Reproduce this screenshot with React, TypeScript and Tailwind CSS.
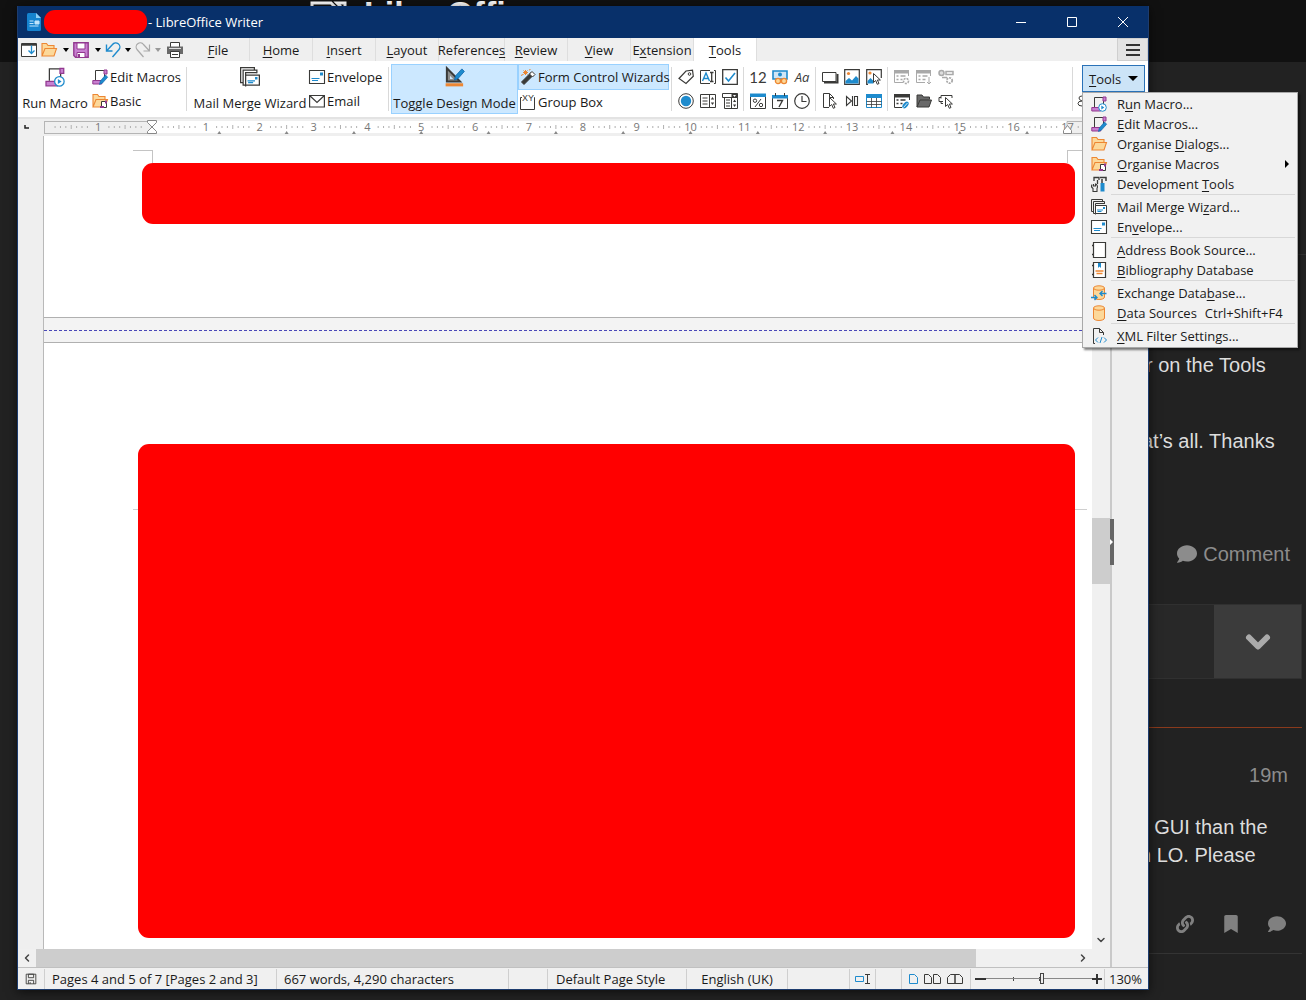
import React from "react";
import { FaBookmark, FaComment, FaLink } from "react-icons/fa";
import { ChevronDown, ChevronLeft, ChevronRight } from "lucide-react";
import clsx from "clsx";

const DARK = "#3a3a38";
const BLUE = "#1e8bcd";
const ORANGE = "#ed8733";
const PURPLE = "#92398f";
const GREY = "#a9a9a9";

const scroll = (
  <>
    <path d="M3.500 11V1.500H12M12.500 10V5" stroke={DARK} />
    <path d="M12 1h3v4h-3z" fill="#c77fd0" stroke={PURPLE} />
    <path d="M.8 11.500h9v3.500h-9z" fill="#c77fd0" stroke={PURPLE} />
  </>
);

const folder = (
  <path
    d="M1 14V1.500H5.500l1.500 2h6v2.500M1 14l3-7.500h11.500L13 14z"
    fill="#fcd89a"
    stroke={ORANGE}
    strokeWidth="1.100"
  />
);

const pencil = (
  <path d="M7.500 15.500l.8-3.500L13.500 6l2.200 2.200L10.500 14z" fill={BLUE} stroke="#0a62a8" strokeWidth=".6" />
);

const mail = (
  <>
    <path d="M.5 1.500h15v13H.5z" fill="#fff" stroke={DARK} strokeWidth="1.100" />
    <path d="M11 3.500h3v3h-3z" fill={BLUE} />
    <path d="M2.500 9.500h8M3 11.500h6" stroke={BLUE} />
  </>
);

const mergeMail = (
  <>
    <path d="M2 12.500H.5V.5h11v1.500M4 14.500H2.500V2.500h11V5" stroke={DARK} />
    <path d="M4.500 15.500V4.500h9" stroke={DARK} />
    <path d="M4.500 6.500h11v8h-11z" fill="#fff" stroke={DARK} />
    <path d="M12 8h2v2h-2z" fill={BLUE} />
    <path d="M6 11h6M6.500 12.500h4" stroke={BLUE} />
  </>
);

const cursor = (
  <path d="M7.500 4.500v9l2.200-2 1.600 3.800 1.700-.8-1.600-3.500h3z" fill="#fff" stroke={DARK} />
);

const icons: Record<string, React.ReactNode> = {
  sidebarDown: (
    <>
      <path d="M.5 1.500h15v13H.5z" fill="#fff" stroke={DARK} />
      <path d="M1 2.500h14" stroke={DARK} strokeWidth="2.500" />
      <path d="M10.500 3.500v8M7.500 8.500l3 3 3-3" stroke={BLUE} strokeWidth="1.300" />
    </>
  ),
  folder,
  save: (
    <>
      <path d="M.8.8h14.400v14.400H2.500L.8 13.500z" fill="#c77fd0" stroke={PURPLE} strokeWidth="1.400" />
      <path d="M4 1h8v6H4z" fill="#fff" stroke={PURPLE} />
      <path d="M4 15v-4.500h8V15" fill="#fff" stroke={PURPLE} />
      <path d="M6 12v3" stroke={PURPLE} strokeWidth="2" />
    </>
  ),
  undo: (
    <path d="M1.500 2.500v6.500h6M1.500 9l6-6.500a4 4 0 0 1 6.500 5L7.500 15" stroke={BLUE} strokeWidth="1.400" />
  ),
  redo: (
    <path d="M14.500 2.500v6.500h-6M14.500 9l-6-6.500a4 4 0 0 0-6.500 5L8.500 15" stroke={GREY} strokeWidth="1.200" />
  ),
  print: (
    <>
      <path d="M3.500 5V.5h9V5" fill="#fff" stroke={DARK} />
      <path d="M0 4.500h16V12H0z" fill="#696969" />
      <path d="M2 6.500h12" stroke="#ddd" />
      <path d="M3.500 9.500h9v6h-9z" fill="#fff" stroke={DARK} />
      <path d="M5 12.500h6" stroke={DARK} />
    </>
  ),
  runMacro: (
    <>
      {scroll}
      <circle cx="11.500" cy="11.500" r="3.800" fill="#fff" stroke={BLUE} />
      <path d="M10.300 9.500v4l3-2z" fill={BLUE} />
    </>
  ),
  editMacro: (
    <>
      {scroll}
      {pencil}
    </>
  ),
  basic: (
    <>
      {folder}
      <path d="M9.500 8.500h5v6h-5z" fill="#fff" stroke={DARK} />
      <path d="M8 14h4M14 7.500v3" stroke={PURPLE} strokeWidth="2" />
    </>
  ),
  mail,
  mergeMail,
  email: <path d="M.6 2.500h14.800v11.500H.6zM.6 2.500L8 9.500l7.400-7" stroke={DARK} strokeWidth="1.200" />,
  design: (
    <>
      <path d="M1.500 1v10.500H12z" fill="#8d8d8b" stroke={DARK} strokeWidth="1.600" />
      <path d="M4 7v2.500h2.500z" fill="#cce8ff" />
      <path d="M7.500 10.500l1-3.500L13.500 1.500l2 2-5 5.700z" fill={BLUE} stroke="#0a62a8" strokeWidth=".6" />
      <path d="M.5 13h14v2.500H.5z" fill={ORANGE} />
    </>
  ),
  wand: (
    <>
      <path d="M1.500 13L11 3.500l2.500 2.500L4 15.500z" fill={DARK} stroke={DARK} />
      <path d="M9.500 5l2.500-2.500 3 3L12.500 8z" fill="#fff" stroke={DARK} />
      <path d="M5.500 1v5M3 3.500h5M3.500 1.500l4 4M7.500 1.500l-4 4" stroke={ORANGE} />
      <path d="M1 6.500l2-1M9 1l1.500-.5" stroke={ORANGE} />
    </>
  ),
  groupBox: (
    <>
      <path d="M2 3.500H.5v12h14v-12H14" stroke={DARK} />
      <text x="2" y="7" fontSize="9" fontFamily="Liberation Sans, sans-serif" fill={DARK}>
        XY
      </text>
    </>
  ),
  tag: (
    <>
      <path d="M1 9.500L8 2l6.500-.8.8 6L8 14.500z" fill="#fff" stroke={DARK} strokeWidth="1.200" />
      <circle cx="11.500" cy="5" r="1.300" stroke={DARK} />
    </>
  ),
  textBox: (
    <>
      <path d="M10 1.500H.5v13H10M14 1.500h1.500v13H14" stroke={DARK} />
      <path d="M2.500 12L6 4l3.500 8M4 9.500h4" stroke={BLUE} strokeWidth="1.400" />
      <path d="M10 3.500h3.500M10 12.500h3.500M11.700 3.500v9" stroke={DARK} strokeWidth="1.300" />
    </>
  ),
  check: (
    <>
      <path d="M.7.7h14.600v14.600H.7z" fill="#fff" stroke={DARK} strokeWidth="1.300" />
      <path d="M3.500 8.500l3 3.500 6.500-8" stroke={BLUE} strokeWidth="1.600" />
    </>
  ),
  radio: (
    <>
      <circle cx="8" cy="8" r="7.300" fill="#fff" stroke={DARK} />
      <circle cx="8" cy="8" r="5.200" fill={BLUE} />
    </>
  ),
  listBox: (
    <>
      <path d="M.5 1.500h15v13H.5zM9.500 1.500v13" fill="#fff" stroke={DARK} />
      <path d="M2.500 5h5M2.500 8h5M2.500 11h5" stroke={DARK} />
      <path d="M10.800 6.500h3.400L12.500 4zM10.800 9.500h3.400L12.500 12z" fill={DARK} />
    </>
  ),
  comboBox: (
    <>
      <path d="M.5.5h15v4H.5zM2.500 4.500h13v11h-13zM9.500 4.500v11" fill="#fff" stroke={DARK} />
      <path d="M4 7h4M4 10h4M4 13h4" stroke={DARK} strokeWidth="1.200" />
      <path d="M9.500.5h6v4h-6z" fill={DARK} />
      <path d="M11 2h3l-1.500 2z" fill="#fff" />
      <path d="M11 9h3.200l-1.600-2.500zM11 11.500h3.200L12.600 14z" fill={DARK} />
    </>
  ),
  numeric: (
    <text x="8" y="14" textAnchor="middle" fontSize="15" fontFamily="Lato, sans-serif" fill={DARK}>
      12
    </text>
  ),
  currency: (
    <>
      <path d="M1 2h14v8H1z" fill="#cfe6f7" stroke={BLUE} strokeWidth="1.600" />
      <circle cx="8" cy="5.500" r="2" fill={BLUE} />
      <circle cx="6" cy="12" r="2.600" fill="#fcd89a" stroke={ORANGE} strokeWidth="1.300" />
      <circle cx="12" cy="12" r="2.600" fill="#fcd89a" stroke={ORANGE} strokeWidth="1.300" />
    </>
  ),
  pattern: (
    <text x="8" y="13" textAnchor="middle" fontSize="13" fontStyle="italic" fontFamily="Open Sans, sans-serif" fill={DARK}>
      Aa
    </text>
  ),
  percent: (
    <>
      <path d="M.5 1.500h15v14H.5z" fill="#fff" stroke={DARK} />
      <path d="M0 .5h16v3.500H0z" fill={BLUE} />
      <circle cx="5" cy="7.700" r="1.700" stroke={DARK} />
      <circle cx="11" cy="12" r="1.700" stroke={DARK} />
      <path d="M11 6l-6 8" stroke={DARK} />
    </>
  ),
  date: (
    <>
      <path d="M.5 2.500h15v13H.5z" fill="#fff" stroke={DARK} />
      <path d="M0 2h16v3.500H0z" fill={BLUE} />
      <path d="M3.500 0v3M12.500 0v3" stroke={DARK} />
      <path d="M5 7.500h5.500L7 14" stroke={DARK} strokeWidth="1.400" />
    </>
  ),
  clock: (
    <>
      <circle cx="8" cy="8" r="7.300" fill="#fff" stroke={DARK} strokeWidth="1.200" />
      <path d="M8 3v5.500h4.500" stroke={DARK} strokeWidth="1.200" />
    </>
  ),
  pushButton: (
    <>
      <path d="M2 13.500h13.500V5" stroke={DARK} strokeWidth="2" />
      <path d="M.5 3.500h13.500v9H.5z" fill="#fff" stroke={DARK} />
    </>
  ),
  image: (
    <>
      <path d="M.7.7h14.600v14.600H.7z" fill="#fff" stroke={DARK} strokeWidth="1.200" />
      <circle cx="4.500" cy="4.500" r="1.600" fill={ORANGE} />
      <path d="M1.500 14.500V12l3.500-3 3 2.500 4-4.500 2.500 2.500v5z" fill={BLUE} />
    </>
  ),
  imageControl: (
    <>
      <path d="M2 15.300H.7V.7h14.600V9" stroke={DARK} strokeWidth="1.200" />
      <circle cx="4" cy="4" r="1.600" fill={ORANGE} />
      <path d="M1.500 14.500V12l3-3 3 3v2.500z" fill={BLUE} />
      {cursor}
    </>
  ),
  fileSelect: (
    <>
      <path d="M7 14.500H1.500V.5h6l4 4V6M7.500.5v4h4" stroke={DARK} />
      {cursor}
    </>
  ),
  navigation: <path d="M2.500 3.500v9l5-4.500zM8.500 3v10M10.500 3.500h3v9h-3z" stroke={DARK} strokeWidth="1.100" />,
  table: (
    <>
      <path d="M.5 1.500h15v13H.5z" fill="#fff" stroke={BLUE} />
      <path d="M0 1h16v4H0z" fill={BLUE} />
      <path d="M.5 8.500h15M.5 11.500h15M5.500 5v9.500M10.500 5v9.500" stroke={DARK} strokeWidth=".8" />
    </>
  ),
  formProps: (
    <>
      <path d="M9 13.500H.5v-12h14V7" stroke={GREY} />
      <path d="M0 1h15v3.500H0z" fill={GREY} />
      <path d="M2.500 7h2M6.500 7h5M2.500 10.500h2M6.500 10.500h2" stroke={GREY} strokeWidth="1.500" />
      <circle cx="12" cy="12" r="2.500" stroke={GREY} strokeWidth="1.600" strokeDasharray="2 1" />
    </>
  ),
  formDown: (
    <>
      <path d="M9 13.500H.5v-12h14V7" stroke={GREY} />
      <path d="M0 1h15v3.500H0z" fill={GREY} />
      <path d="M2.500 7h2M6.500 7h5M2.500 10.500h2M6.500 10.500h3" stroke={GREY} strokeWidth="1.500" />
      <path d="M13 8v7M11 13l2 2 2-2" stroke={GREY} />
    </>
  ),
  controlProps: (
    <>
      <circle cx="3.500" cy="4" r="2.500" fill="#ddd" stroke={GREY} strokeWidth="1.500" />
      <path d="M8 2.500h7v3H8zM4 8.500h5" stroke={GREY} strokeWidth="1.500" />
      <circle cx="11.500" cy="11.500" r="2.700" stroke={GREY} strokeWidth="1.800" strokeDasharray="2 1" />
    </>
  ),
  formDesign: (
    <>
      <path d="M8 14.500H.5v-13h15V7" stroke={DARK} />
      <path d="M0 1h16v3.500H0z" fill={DARK} />
      <path d="M2.500 7h2M6.500 7h5M2.500 10.500h2M6.500 10.500h2" stroke={DARK} strokeWidth="1.500" />
      <ellipse cx="11.500" cy="12" rx="4" ry="2.300" transform="rotate(-50 11.500 12)" fill={BLUE} />
      <path d="M9.500 14.500l4-4.500" stroke="#fff" strokeWidth=".8" />
    </>
  ),
  openDark: (
    <path d="M1 14V2h5l1.500 2h6v2.500M1 14l3-7h11.500L13 14z" fill="#696969" stroke={DARK} />
  ),
  autoFocus: (
    <>
      <path d="M5 10.500H3V8M3 5.500V2.500h11V5M3 4.500H1v4h4" stroke={DARK} />
      {cursor}
    </>
  ),
  devTools: (
    <>
      <path d="M3 5V1.500h5V4M6.500 4v4" stroke={DARK} strokeWidth="1.300" />
      <path d="M2.500 8v2h2V8a3 3 0 0 1 1.500 4.500v3h-4v-3A3 3 0 0 1 1 8.500" stroke={DARK} strokeWidth="1.100" />
      <path d="M9 1.500h6V5M11 3v4" stroke={DARK} strokeWidth="1.500" />
      <path d="M9.500 7h4v8.500h-4z" fill={BLUE} />
    </>
  ),
  addressBook: (
    <>
      <path d="M2.500.5h12v15h-12z" fill="#fff" stroke={DARK} strokeWidth="1.200" />
      <path d="M1 3.500h2M1 12.500h2" stroke={DARK} strokeWidth="1.500" />
    </>
  ),
  bibliography: (
    <>
      <path d="M2.500.5h12v15h-12z" fill="#fff" stroke={DARK} strokeWidth="1.200" />
      <path d="M1 3.500h2M1 12.500h2" stroke={DARK} strokeWidth="1.500" />
      <path d="M7 1h3v5L8.500 4.500 7 6z" fill={BLUE} />
      <path d="M4.500 9h8M5.500 11.500h6" stroke={ORANGE} strokeWidth="1.500" />
    </>
  ),
  database: (
    <>
      <path d="M2.500 3v10c0 3.300 11 3.300 11 0V3" fill="#fcd89a" stroke={ORANGE} />
      <ellipse cx="8" cy="3" rx="5.500" ry="2.200" fill="#fcd89a" stroke={ORANGE} />
    </>
  ),
  exchange: (
    <>
      <path d="M2.500 3v9c0 3.300 11 3.300 11 0V3" fill="#fcd89a" stroke={ORANGE} />
      <ellipse cx="8" cy="3" rx="5.500" ry="2.200" fill="#fcd89a" stroke={ORANGE} />
      <path d="M15.500 8.500H9M11.500 6L9 8.500l2.500 2.500M0 12.500h6M3.500 10L6 12.500 3.500 15" stroke={BLUE} strokeWidth="1.400" />
    </>
  ),
  xml: (
    <>
      <path d="M4 15.500H2.500V.5h6l4 4V7M8.500.5v4h4" stroke={DARK} />
      <path d="M7 9.500L4.500 12 7 14.500M13 9.500l2.500 2.500-2.500 2.500M11 9l-2 6" stroke={BLUE} />
    </>
  ),
  floppy: (
    <>
      <path d="M2.500 2.500h11v11h-11z" stroke={DARK} />
      <path d="M5 2.500h6v4H5zM5 13.500v-4h6v4M7 11.500v2" stroke={DARK} />
    </>
  ),
};

function Icon({ name, className = "size-4" }: { name: string; className?: string }) {
  return (
    <svg viewBox="0 0 16 16" fill="none" className={clsx("shrink-0 overflow-visible", className)} aria-hidden="true">
      {icons[name]}
    </svg>
  );
}

// "~" goes before the access key, as in the menu resources
function Mnemonic({ text }: { text: string }) {
  const at = text.indexOf("~");
  if (at < 0) return <>{text}</>;
  return (
    <span className="whitespace-pre">
      {text.slice(0, at)}
      <u className="underline-offset-2">{text[at + 1]}</u>
      {text.slice(at + 2)}
    </span>
  );
}

function Arrow({ className = "text-black" }: { className?: string }) {
  return (
    <svg viewBox="0 0 6 4" className={clsx("h-1 w-1.5 shrink-0", className)} aria-hidden="true">
      <path d="M0 0h6L3 4z" fill="currentColor" />
    </svg>
  );
}

function TitleBar() {
  return (
    <header className="flex h-8 shrink-0 items-center bg-[#08306a] pl-2 text-white">
      <svg viewBox="0 0 16 18" className="h-[18px] w-4" aria-hidden="true">
        <path d="M1 1.500Q1 0 2.500 0H10l5 5v11.500q0 1.500-1.500 1.500h-11Q1 18 1 16.500z" fill="#1583cf" />
        <path d="M10 0l5 5h-5z" fill="#8fd0f7" />
        <path d="M3.500 8h4M3.500 10.500h4M3.500 13h9M9 8h4v3H9z" stroke="#bfe4fb" fill="#bfe4fb" />
      </svg>
      <div className="ml-0.5 h-6 w-[103px] rounded-[11px] bg-[#ff0000]" />
      <h1 className="ml-px grow">- LibreOffice Writer</h1>
      <button aria-label="Minimise" className="flex h-8 w-[51px] items-center justify-center">
        <svg viewBox="0 0 10 10" className="size-2.5">
          <path d="M0 5.500h10" stroke="#fff" />
        </svg>
      </button>
      <button aria-label="Maximise" className="flex h-8 w-[51px] items-center justify-center">
        <svg viewBox="0 0 10 10" className="size-2.5">
          <path d="M.5.5h9v9h-9z" stroke="#fff" fill="none" />
        </svg>
      </button>
      <button aria-label="Close" className="flex h-8 w-[51px] items-center justify-center">
        <svg viewBox="0 0 10 10" className="size-2.5">
          <path d="M0 0l10 10M10 0L0 10" stroke="#fff" />
        </svg>
      </button>
    </header>
  );
}

const tabs = ["~File", "~Home", "~Insert", "~Layout", "Reference~s", "~Review", "~View", "E~xtension", "~Tools"];

function TabBar() {
  return (
    <nav className="flex h-[23px] shrink-0 bg-[#efefef]">
      <div className="flex w-[169px] shrink-0 items-center pl-[3px]">
        <button aria-label="Sidebar"><Icon name="sidebarDown" /></button>
        <button aria-label="Open" className="ml-1 flex items-center gap-1.5"><Icon name="folder" /><Arrow /></button>
        <button aria-label="Save" className="ml-1 flex items-center gap-1.5"><Icon name="save" /><Arrow /></button>
        <button aria-label="Undo" className="ml-1 flex items-center gap-1"><Icon name="undo" /><Arrow /></button>
        <button aria-label="Redo" className="ml-1 flex items-center gap-1"><Icon name="redo" /><Arrow className="text-[#999]" /></button>
        <button aria-label="Print" className="ml-1.5"><Icon name="print" /></button>
      </div>
      {tabs.map((tab) => (
        <button
          key={tab}
          className={clsx(
            "flex shrink-0 items-center justify-center border-r border-[#dedede] pt-px",
            tab === "Reference~s" ? "w-[66px]" : "w-[63px]",
            tab === "~Tools" && "bg-white"
          )}
        >
          <Mnemonic text={tab} />
        </button>
      ))}
      <button
        aria-label="Menu"
        className="ml-auto flex w-[31px] items-center justify-center border border-[#cfcfcf] bg-[#e3e3e3]"
      >
        <svg viewBox="0 0 14 12" className="h-3 w-3.5">
          <path d="M0 1h14M0 6h14M0 11h14" stroke="#333" strokeWidth="2" />
        </svg>
      </button>
    </nav>
  );
}

function ToolButton({ icon, label }: { icon: string; label: string }) {
  return (
    <button className="flex h-6 items-center gap-0.5 whitespace-nowrap">
      <Icon name={icon} />
      {label}
    </button>
  );
}

function Divider() {
  return <div className="h-11 w-px shrink-0 bg-[#d9d9d9]" />;
}

const iconGroups = [
  ["tag", "textBox", "check", "radio", "listBox", "comboBox"],
  ["numeric", "currency", "pattern", "percent", "date", "clock"],
  ["pushButton", "image", "imageControl", "fileSelect", "navigation", "table"],
  ["formProps", "formDown", "controlProps", "formDesign", "openDark", "autoFocus"],
];

const menu = [
  [
    { icon: "runMacro", label: "R~un Macro..." },
    { icon: "editMacro", label: "~Edit Macros..." },
    { icon: "folder", label: "Organise ~Dialogs..." },
    { icon: "basic", label: "~Organise Macros", submenu: true },
    { icon: "devTools", label: "Development ~Tools" },
  ],
  [
    { icon: "mergeMail", label: "Mail Merge Wi~zard..." },
    { icon: "mail", label: "En~velope..." },
  ],
  [
    { icon: "addressBook", label: "~Address Book Source..." },
    { icon: "bibliography", label: "~Bibliography Database" },
  ],
  [
    { icon: "exchange", label: "Exchange Data~base..." },
    { icon: "database", label: "~Data Sources", shortcut: "Ctrl+Shift+F4" },
  ],
  [{ icon: "xml", label: "~XML Filter Settings..." }],
] as { icon: string; label: string; submenu?: boolean; shortcut?: string }[][];

function ToolsMenu() {
  return (
    <div
      role="menu"
      className="absolute top-full left-0 z-20 w-[216px] border border-[#a8a8a8] bg-[#f1f1f1] pt-px pb-px shadow-[2px_2px_2px_rgba(0,0,0,0.5)]"
    >
      {menu.map((section, i) => (
        <React.Fragment key={i}>
          {i > 0 && <div className="mr-0.5 mb-px ml-7 border-t border-[#d8d8d8] pb-px" />}
          {section.map((item) => (
            <button
              key={item.label}
              role="menuitem"
              className="flex h-5 w-full items-center pl-2 text-left whitespace-nowrap"
            >
              <Icon name={item.icon} />
              <span className="ml-2.5">
                <Mnemonic text={item.label} />
              </span>
              {item.shortcut && <span className="ml-2">{item.shortcut}</span>}
              {item.submenu && (
                <svg viewBox="0 0 4 8" className="mr-2 ml-auto h-2 w-1">
                  <path d="M0 0l4 4-4 4z" fill="#000" />
                </svg>
              )}
            </button>
          ))}
        </React.Fragment>
      ))}
    </div>
  );
}

function Toolbar() {
  return (
    <div className="flex h-14 shrink-0 items-center bg-white pr-[3px]">
      <button className="flex h-12 w-[74px] shrink-0 flex-col items-center justify-between pb-0.5 whitespace-nowrap">
        <Icon name="runMacro" className="mt-0.5 size-5" />
        Run Macro
      </button>
      <div className="w-[94px] shrink-0">
        <ToolButton icon="editMacro" label="Edit Macros" />
        <ToolButton icon="basic" label="Basic" />
      </div>
      <Divider />
      <button className="ml-1 flex h-12 w-[118px] shrink-0 flex-col items-center justify-between pb-0.5 whitespace-nowrap">
        <Icon name="mergeMail" className="mt-0.5 size-5" />
        Mail Merge Wizard
      </button>
      <div className="w-[79px] shrink-0">
        <ToolButton icon="mail" label="Envelope" />
        <ToolButton icon="email" label="Email" />
      </div>
      <Divider />
      <button className="ml-0.5 flex h-[50px] w-[127px] shrink-0 flex-col items-center justify-between border border-[#99d1ff] bg-[#cce8ff] pb-0.5 whitespace-nowrap">
        <Icon name="design" className="mt-0.5 size-5" />
        Toggle Design Mode
      </button>
      <div className="w-[151px] shrink-0">
        <div className="border border-[#99d1ff] bg-[#cce8ff] pl-px">
          <ToolButton icon="wand" label="Form Control Wizards" />
        </div>
        <div className="pl-0.5">
          <ToolButton icon="groupBox" label="Group Box" />
        </div>
      </div>
      <div className="ml-0.5 flex shrink-0">
        {iconGroups.map((group) => (
          <div key={group[0]} className="flex items-center">
            <Divider />
            <div className="mr-[5px] ml-1.5 grid grid-cols-3 gap-x-1.5 gap-y-2">
              {group.map((name) => (
                <button key={name} aria-label={name}>
                  <Icon name={name} />
                </button>
              ))}
            </div>
          </div>
        ))}
      </div>
      <div className="ml-auto flex items-center gap-1">
        <Divider />
        <svg viewBox="0 0 5 12" className="mt-6 h-3 w-[5px]" aria-hidden="true">
          <path d="M5 1Q2 1 2 3t3 3Q1 6 1 8.500T5 11" fill="none" stroke={DARK} />
        </svg>
      </div>
      <div className="relative self-start pt-1">
        <button
          aria-haspopup="menu"
          aria-expanded="true"
          className="flex h-[27px] w-[63px] items-center justify-between border border-[#2a72b8] bg-[#cce4f7] px-1.5"
        >
          <Mnemonic text="~Tools" />
          <svg viewBox="0 0 10 5" className="h-[5px] w-2.5">
            <path d="M0 0h10L5 5z" fill="#000" />
          </svg>
        </button>
        <ToolsMenu />
      </div>
    </div>
  );
}

const CM = 53.85;
const ZERO = 108;

function Ruler() {
  const ticks: number[] = [];
  for (let i = -19; i < 190; i++) {
    // leave room for the numbers
    if (![0, 1, 9].includes(Math.abs(i) % 10)) ticks.push(i);
  }
  const stops = Array.from({ length: 13 }, (_, i) => ZERO + CM * 1.25 * (i + 1));

  return (
    <div className="flex h-[19px] shrink-0 border-t-2 border-[#e3e3e3] bg-[#efefef]">
      <svg viewBox="0 0 26 16" className="h-4 w-[26px] shrink-0" aria-hidden="true">
        <path d="M7 6v3h4" fill="none" stroke="#222" strokeWidth="1.500" />
      </svg>
      <svg className="h-4 min-w-0 grow" aria-label="Ruler">
        <rect x={ZERO} y="2" width="915" height="12" fill="#fff" />
        <rect x=".5" y="2.500" width={ZERO} height="12" fill="none" stroke="#b5b5b5" />
        <path d="M1067 2.500h-44v12h44" fill="none" stroke="#b5b5b5" />
        {ticks.map((i) => (
          <path
            key={i}
            d={`M${ZERO + (i * CM) / 10} ${i % 5 === 0 ? 6 : 7}v${i % 5 === 0 ? 4 : 2}`}
            stroke="#b0b0b0"
          />
        ))}
        {[-1, 1, 2, 3, 4, 5, 6, 7, 8, 9, 10, 11, 12, 13, 14, 15, 16, 17].map((n) => (
          <text key={n} x={ZERO + n * CM} y="12" textAnchor="middle" fontSize="11" fill="#777">
            {Math.abs(n)}
          </text>
        ))}
        {stops.map((x) => (
          <path key={x} d={`M${x - 2} 15l2-3 2 3z`} fill="#888" />
        ))}
        <path d="M103.500 1.500h9v2l-9 9v2h9v-2l-9-9z" fill="#fff" stroke="#888" />
        <path d="M1019.500 14.500h8v-3l-4-5-4 5z" fill="#fff" stroke="#888" />
      </svg>
    </div>
  );
}

function Pages() {
  return (
    <main className="flex min-w-0 grow flex-col border-l border-[#b9b9b9] bg-[#efefef]">
      <section className="border-b border-[#b0b0b0] bg-white pt-3.5 pb-[93px]">
        <div className="flex h-[13px] justify-between pr-[5px] pl-[89px]">
          <div className="w-5 border-t border-r border-[#c4c4c4]" />
          <div className="w-5 border-t border-l border-[#c4c4c4]" />
        </div>
        <div className="mr-[17px] ml-[98px] h-[61px] rounded-[11px] bg-[#ff0000]" />
      </section>
      <div className="flex h-6 shrink-0 items-center bg-[#f3f3f3]">
        <div className="w-full border-t border-dashed border-[#4a48b8]" />
      </div>
      <section className="relative flex grow flex-col border-t border-[#b0b0b0] bg-white pt-[101px] pb-[11px]">
        <div className="absolute top-[166px] right-[5px] left-[89px] border-t border-[#cfcfcf]" />
        <div className="relative mr-[17px] ml-[94px] grow rounded-[11px] bg-[#ff0000]" />
      </section>
    </main>
  );
}

function Editor() {
  return (
    <div className="flex min-h-0 grow bg-[#efefef]">
      <div className="flex min-w-0 grow flex-col">
        <Ruler />
        <div className="flex min-h-0 grow">
          <div className="w-[25px] shrink-0" />
          <Pages />
          <div className="flex w-[18px] shrink-0 flex-col bg-[#f0f0f0]">
            <div className="grow-[382]" />
            <div className="h-[66px] bg-[#cdcdcd]" />
            <div className="grow-[347]" />
            <button aria-label="Scroll down" className="flex h-[18px] items-center justify-center">
              <ChevronDown className="size-3 text-[#444]" strokeWidth={3} />
            </button>
          </div>
        </div>
        <div className="flex h-[18px] shrink-0 bg-[#f0f0f0]">
          <button aria-label="Scroll left" className="flex w-[18px] shrink-0 items-center justify-center">
            <ChevronLeft className="size-3 text-[#444]" strokeWidth={3} />
          </button>
          <div className="grow-[938] bg-[#cdcdcd]" />
          <div className="grow-[98]" />
          <button aria-label="Scroll right" className="mr-[18px] flex w-[18px] shrink-0 items-center justify-center">
            <ChevronRight className="size-3 text-[#444]" strokeWidth={3} />
          </button>
        </div>
      </div>
      <aside className="flex w-[38px] shrink-0 items-center border-l-2 border-[#c9c9c9]">
        <button aria-label="Show sidebar" className="-ml-0.5 flex h-[46px] w-1 items-center bg-[#666]">
          <svg viewBox="0 0 3 6" className="h-1.5 w-[3px]">
            <path d="M0 0l3 3-3 3z" fill="#fff" />
          </svg>
        </button>
      </aside>
    </div>
  );
}

function StatusBar() {
  const cell = "flex h-5 shrink-0 items-center border-r border-[#cfcfcf]";
  return (
    <footer className="flex h-[22px] shrink-0 items-center border-t border-[#c0c0c0] bg-[#f0f0f0] whitespace-nowrap">
      <div className={clsx(cell, "w-[27px] justify-center")}>
        <Icon name="floppy" className="size-3.5" />
      </div>
      <div className={clsx(cell, "w-[232px] pl-[7px]")}>Pages 4 and 5 of 7 [Pages 2 and 3]</div>
      <div className={clsx(cell, "w-[232px] pl-[7px]")}>667 words, 4,290 characters</div>
      <div className={clsx(cell, "grow")} />
      <div className={clsx(cell, "w-[139px] pl-2")}>Default Page Style</div>
      <div className={clsx(cell, "w-[101px] justify-center")}>English (UK)</div>
      <div className={clsx(cell, "w-[62px]")} />
      <div className={clsx(cell, "w-[26px] justify-center")}>
        <svg viewBox="0 0 18 12" className="h-3 w-[18px]" fill="none">
          <path d="M1.500 3.500h8v5h-8z" stroke={BLUE} />
          <path d="M11 1.500h5M11 10.500h5M13.500 1.500v9" stroke={DARK} />
        </svg>
      </div>
      <div className={clsx(cell, "w-[26px]")} />
      <div className={clsx(cell, "w-[69px] justify-center gap-1.5")}>
        <svg viewBox="0 0 9 12" className="h-3 w-[9px]" fill="none">
          <path d="M.5 1.500h5l3 3v6h-8z" stroke={BLUE} />
        </svg>
        <svg viewBox="0 0 17 12" className="h-3 w-[17px]" fill="none">
          <path d="M.5 1.500h4l3 3v6h-7zM9.500 1.500h4l3 3v6h-7z" stroke={DARK} />
        </svg>
        <svg viewBox="0 0 16 12" className="h-3 w-4" fill="none">
          <path d="M8 10.500H.5v-6l3-3H8zM8 1.500h4.500l3 3v6H8z" stroke={DARK} />
        </svg>
      </div>
      <div className={clsx(cell, "w-[134px] pl-1")}>
        <button aria-label="Zoom out" className="h-0.5 w-[11px] shrink-0 bg-[#333]" />
        <div className="relative flex min-w-0 grow items-center">
          <div className="absolute left-[27px] h-1 w-px bg-[#444]" />
          <div className="absolute left-1/2 h-1 w-px bg-[#444]" />
          <input
            type="range"
            aria-label="Zoom"
            min={0}
            max={100}
            defaultValue={53}
            className="relative h-3 w-full appearance-none bg-transparent [&::-webkit-slider-runnable-track]:h-px [&::-webkit-slider-runnable-track]:bg-[#888] [&::-webkit-slider-thumb]:-mt-[5px] [&::-webkit-slider-thumb]:h-[11px] [&::-webkit-slider-thumb]:w-1 [&::-webkit-slider-thumb]:appearance-none [&::-webkit-slider-thumb]:border [&::-webkit-slider-thumb]:border-[#444] [&::-webkit-slider-thumb]:bg-[#eee]"
          />
        </div>
        <button aria-label="Zoom in" className="mr-0.5 shrink-0">
          <svg viewBox="0 0 10 10" className="size-2.5">
            <path d="M0 5h10M5 0v10" stroke="#333" strokeWidth="2" />
          </svg>
        </button>
      </div>
      <div className="w-[43px] shrink-0 pl-1">130%</div>
    </footer>
  );
}

function ForumPage() {
  return (
    <div className="flex min-h-screen flex-col bg-[#222] font-['Liberation_Sans',sans-serif] text-xl text-[#ddd]">
      <div className="flex h-[62px] shrink-0 items-start gap-4 bg-[#111] pl-[310px] text-white">
        <svg viewBox="0 0 38 30" className="h-[30px] w-[38px]" fill="none" aria-hidden="true">
          <path d="M2 28V3h19l4 4M27 3h8v8z" stroke="#fff" strokeWidth="3" />
        </svg>
        <div className="-mt-1 text-[34px] leading-none font-bold">LibreOffice</div>
      </div>
      <div className="ml-auto flex w-[166px] grow flex-col pt-[192px] whitespace-nowrap">
        <div className="border-t border-[#303030]" />
        <p className="mt-24 pl-1.5 leading-7">r on the Tools</p>
        <p className="mt-12 pl-0.5 leading-7">at’s all. Thanks</p>
        <a href="#comment" className="mt-[85px] flex items-center justify-end gap-1.5 pr-4 leading-7 text-[#8c8c8c]">
          <FaComment className="size-5" />
          Comment
        </a>
        <div className="mt-9 mr-1 flex h-[75px] border border-[#303030] bg-[#282828]">
          <button aria-label="Expand" className="ml-auto flex w-[87px] items-center justify-center bg-[#3b3b3b]">
            <ChevronDown className="size-9 text-[#aaa]" strokeWidth={4} />
          </button>
        </div>
        <div className="mt-12 mr-1 border-t border-[#8a3a1c]" />
        <p className="mt-[33px] pr-[18px] text-right leading-7 text-[#8c8c8c]">19m</p>
        <p className="mt-6 pl-0.5 leading-7">r GUI than the</p>
        <p className="leading-7">n LO. Please</p>
        <div className="mt-[46px] flex items-center justify-end gap-7 pr-5 text-[#808080]">
          <a href="#link" aria-label="Link"><FaLink className="size-[18px]" /></a>
          <a href="#save" aria-label="Bookmark"><FaBookmark className="size-[18px]" /></a>
          <a href="#reply" aria-label="Reply"><FaComment className="size-[18px]" /></a>
        </div>
        <div className="mt-5 mr-1 border-t border-[#343434]" />
      </div>
    </div>
  );
}

export default function App() {
  return (
    <div className="relative min-h-screen overflow-hidden">
      <ForumPage />
      <div className="absolute top-1.5 right-[157px] bottom-2.5 left-[17px] flex flex-col border border-t-0 border-[#1d3c6e] bg-[#f0f0f0] font-['Open_Sans',sans-serif] text-[13px] leading-4 text-[#1a1a1a] shadow-[0_2px_10px_rgba(0,0,0,0.6)]">
        <TitleBar />
        <TabBar />
        <Toolbar />
        <Editor />
        <StatusBar />
      </div>
    </div>
  );
}
